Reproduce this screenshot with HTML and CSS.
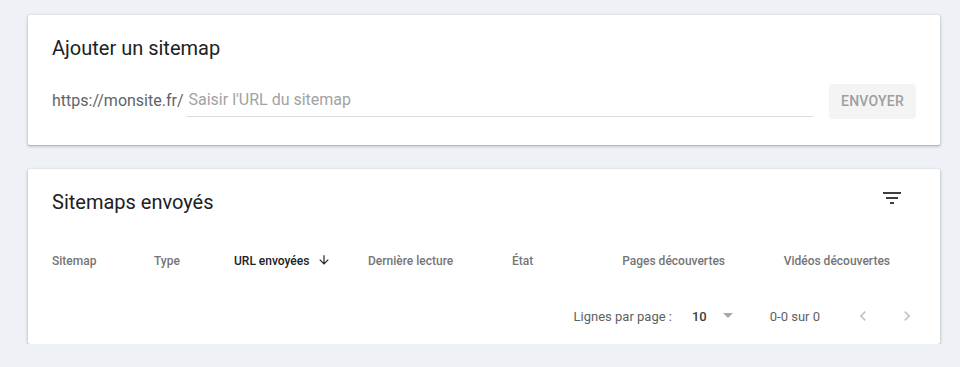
FILE: index.html
```html
<!DOCTYPE html>
<html lang="fr">
<head>
<meta charset="utf-8">
<title>Sitemaps</title>
<link rel="stylesheet" href="styles.css">
</head>
<body>
<main class="page">
  <section class="card add-card">
    <h2 class="card-title">Ajouter un sitemap</h2>
    <div class="add-row">
      <span class="prefix">https://monsite.fr/</span>
      <div class="field"><input class="field-input" type="text" placeholder="Saisir l'URL du sitemap"></div>
      <button class="send-btn" type="button">Envoyer</button>
    </div>
  </section>

  <section class="card list-card">
    <div class="list-head">
      <h2 class="card-title">Sitemaps envoyés</h2>
      <span class="filter-btn">
        <svg width="24" height="24" viewBox="0 0 24 24"><path fill="#3c4043" d="M10 18h4v-2h-4v2zM3 6v2h18V6H3zm3 7h12v-2H6v2z"/></svg>
      </span>
    </div>
    <div class="table-head">
      <span class="th">Sitemap</span>
      <span class="th">Type</span>
      <span class="th th-active">URL envoyées
        <svg class="sort-ico" width="14" height="14" viewBox="0 0 24 24"><path fill="#202124" d="M20 12l-1.41-1.41L13 16.17V4h-2v12.17l-5.58-5.59L4 12l8 8 8-8z"/></svg>
      </span>
      <span class="th">Dernière lecture</span>
      <span class="th">État</span>
      <span class="th th-right">Pages découvertes</span>
      <span class="th th-right">Vidéos découvertes</span>
    </div>
    <div class="pager">
      <span class="pager-label">Lignes par page :</span>
      <span class="pager-size">10</span>
      <svg class="pager-drop" width="24" height="24" viewBox="0 0 24 24"><path fill="#a8a8a8" d="M7 10l5 5 5-5z"/></svg>
      <span class="pager-range">0-0 sur 0</span>
      <svg class="pager-prev" width="20" height="20" viewBox="0 0 24 24"><path fill="#c4c4c4" d="M15.41 7.41L14 6l-6 6 6 6 1.41-1.41L10.83 12z"/></svg>
      <svg class="pager-next" width="20" height="20" viewBox="0 0 24 24"><path fill="#c4c4c4" d="M10 6L8.59 7.41 13.17 12l-4.58 4.59L10 18l6-6z"/></svg>
    </div>
  </section>
</main>
</body>
</html>
```
FILE: styles.css
```css
* { box-sizing: border-box; }
html, body { margin: 0; padding: 0; }
body {
  background: #eef1f6;
  font-family: Roboto, "Liberation Sans", Arial, sans-serif;
  color: #202124;
}
.page {
  padding: 15px 20px 0 28px;
  display: flex;
  flex-direction: column;
  gap: 24px;
}
.card {
  background: #fff;
  border-radius: 2px;
  box-shadow: 0 1px 2px rgba(60,64,67,.3), 0 1px 3px 1px rgba(60,64,67,.12);
}
.card-title {
  margin: 0;
  font-size: 20px;
  font-weight: 400;
  line-height: 28px;
  color: #202124;
}
.add-card {
  height: 130px;
  padding: 19px 24px 0 24px;
}
.add-row {
  margin-top: 21px;
  height: 36px;
  display: flex;
  align-items: center;
}
.prefix {
  font-size: 16px;
  line-height: 20px;
  color: #5f6368;
  white-space: nowrap;
}
.field {
  flex: 1;
  margin: 0 16px 0 2px;
  height: 32px;
  border-bottom: 1px solid #dadce0;
  display: flex;
  align-items: center;
}
.field-input {
  width: 100%;
  border: 0;
  outline: none;
  padding: 0 0 0 3px;
  font: 400 16px/20px Roboto, "Liberation Sans", Arial, sans-serif;
  color: #202124;
  background: transparent;
  margin-top: -1px;
}
.field-input::placeholder { color: #a2a2a2; }
.send-btn {
  width: 87px;
  height: 35px;
  border: 0;
  border-radius: 4px;
  background: #f4f4f4;
  color: #9e9e9e;
  font: 500 14px Roboto, "Liberation Sans", Arial, sans-serif;
  text-transform: uppercase;
  letter-spacing: .2px;
  padding: 0;
}
.list-card {
  height: 175px;
  padding: 19px 24px 0 24px;
  display: flex;
  flex-direction: column;
}
.list-head {
  display: flex;
  justify-content: space-between;
  align-items: flex-start;
  height: 28px;
}
.filter-btn {
  display: block;
  width: 24px;
  height: 24px;
  margin: -2px 12px 0 0;
}
.filter-btn svg { display: block; }
.table-head {
  margin-top: 17px;
  height: 56px;
  display: grid;
  grid-template-columns: 102px 80px 134px 144px 110px 103px 165px;
  align-items: center;
}
.th {
  font-size: 12px;
  font-weight: 500;
  color: #757575;
  white-space: nowrap;
  display: flex;
  align-items: center;
}
.th-active { color: #202124; }
.sort-ico { margin-left: 8px; margin-top: -1px; }
.th-right { justify-content: flex-end; }
.pager {
  height: 56px;
  flex: none;
  display: flex;
  align-items: center;
  justify-content: flex-end;
  margin-right: -1px;
  font-size: 13px;
  color: #616161;
}
.pager svg { display: block; flex: none; }
.pager-label { margin-right: 20px; }
.pager-size { font-weight: 500; color: #3c4043; margin-right: 9px; }
.pager-drop { margin-top: -3px; }
.pager-range { margin-left: 30px; margin-right: 33px; }
.pager-next { margin-left: 24px; }
```
